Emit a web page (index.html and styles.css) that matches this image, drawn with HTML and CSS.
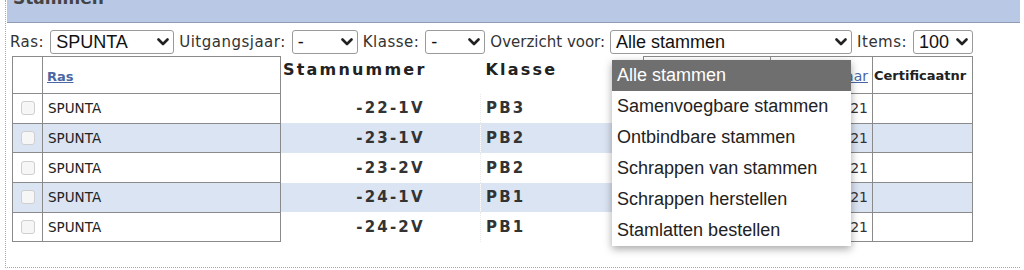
FILE: index.html
```html
<!DOCTYPE html>
<html lang="nl">
<head>
    <meta charset="UTF-8">
    <title>Stammen</title>
    <link rel="stylesheet" href="styles.css">
</head>
<body>
    <div class="panel">
        <div class="panel-head"><h2>Stammen</h2></div>

        <div class="filters">
            <label>Ras:</label>
            <div class="select w-ras"><span>SPUNTA</span><svg class="chev" viewBox="0 0 12 8"><polyline points="1.5,1.5 6,6 10.5,1.5"/></svg></div>
            <label>Uitgangsjaar:</label>
            <div class="select w-year"><span>-</span><svg class="chev" viewBox="0 0 12 8"><polyline points="1.5,1.5 6,6 10.5,1.5"/></svg></div>
            <label>Klasse:</label>
            <div class="select w-class"><span>-</span><svg class="chev" viewBox="0 0 12 8"><polyline points="1.5,1.5 6,6 10.5,1.5"/></svg></div>
            <label class="tight">Overzicht voor:</label>
            <div class="select-wrap">
                <div class="select w-view"><span>Alle stammen</span><svg class="chev" viewBox="0 0 12 8"><polyline points="1.5,1.5 6,6 10.5,1.5"/></svg></div>
                <ul class="dropdown">
                    <li class="active">Alle stammen</li>
                    <li>Samenvoegbare stammen</li>
                    <li>Ontbindbare stammen</li>
                    <li>Schrappen van stammen</li>
                    <li>Schrappen herstellen</li>
                    <li>Stamlatten bestellen</li>
                </ul>
            </div>
            <label>Items:</label>
            <div class="select w-items"><span>100</span><svg class="chev" viewBox="0 0 12 8"><polyline points="1.5,1.5 6,6 10.5,1.5"/></svg></div>
        </div>

        <table class="grid">
            <colgroup>
                <col style="width:30px">
                <col style="width:238px">
                <col style="width:200px">
                <col style="width:163px">
                <col style="width:127px">
                <col style="width:102px">
                <col style="width:100px">
            </colgroup>
            <thead>
                <tr>
                    <th class="bx"></th>
                    <th class="bx"><a href="#">Ras</a></th>
                    <th class="mid nr">Stamnummer</th>
                    <th class="mid cls">Klasse</th>
                    <th class="bx"></th>
                    <th class="bx year"><a href="#">Uitgangsjaar</a></th>
                    <th class="bx cert">Certificaatnr</th>
                </tr>
            </thead>
            <tbody>
                <tr>
                    <td class="bx"><span class="check"></span></td>
                    <td class="bx ras">SPUNTA</td>
                    <td class="mid nr">-22-1V</td>
                    <td class="mid cls">PB3</td>
                    <td class="bx"></td>
                    <td class="bx year">2021</td>
                    <td class="bx"></td>
                </tr>
                <tr class="alt">
                    <td class="bx"><span class="check"></span></td>
                    <td class="bx ras">SPUNTA</td>
                    <td class="mid nr">-23-1V</td>
                    <td class="mid cls">PB2</td>
                    <td class="bx"></td>
                    <td class="bx year">2021</td>
                    <td class="bx"></td>
                </tr>
                <tr>
                    <td class="bx"><span class="check"></span></td>
                    <td class="bx ras">SPUNTA</td>
                    <td class="mid nr">-23-2V</td>
                    <td class="mid cls">PB2</td>
                    <td class="bx"></td>
                    <td class="bx year">2021</td>
                    <td class="bx"></td>
                </tr>
                <tr class="alt">
                    <td class="bx"><span class="check"></span></td>
                    <td class="bx ras">SPUNTA</td>
                    <td class="mid nr">-24-1V</td>
                    <td class="mid cls">PB1</td>
                    <td class="bx"></td>
                    <td class="bx year">2021</td>
                    <td class="bx"></td>
                </tr>
                <tr>
                    <td class="bx"><span class="check"></span></td>
                    <td class="bx ras">SPUNTA</td>
                    <td class="mid nr">-24-2V</td>
                    <td class="mid cls">PB1</td>
                    <td class="bx"></td>
                    <td class="bx year">2021</td>
                    <td class="bx"></td>
                </tr>
            </tbody>
        </table>
    </div>
</body>
</html>
```

FILE: styles.css
```css
body {
    margin: 0;
    width: 1024px;
    height: 270px;
    overflow: hidden;
    background: #fff;
    color: #333;
    font-family: "DejaVu Sans", Verdana, sans-serif;
}
.panel {
    margin: 0 4px 0 5px;
    height: 268px;
    box-sizing: border-box;
    border-left: 1px dotted #aaa;
    border-bottom: 1px dotted #aaa;
}
.panel-head {
    height: 22px;
    margin-left: 1px;
    background: #b9c8e4;
    border-bottom: 1px solid #8e9bb5;
    overflow: hidden;
}
.panel-head h2 {
    margin: -10px 0 0 0;
    padding-left: 6px;
    font-size: 17px;
    line-height: 17px;
    color: #444;
}
.filters {
    display: flex;
    align-items: center;
    height: 24px;
    padding: 7px 0 0 4px;
}
.filters label {
    font-size: 15px;
    letter-spacing: 0.5px;
    margin-right: 6px;
    color: #333;
}
.filters label.tight {
    letter-spacing: 0;
    margin-right: 5px;
}
.select {
    display: flex;
    align-items: center;
    justify-content: space-between;
    height: 24px;
    box-sizing: border-box;
    padding: 0 4px 0 5px;
    margin-right: 5px;
    border: 1px solid #9a9a9a;
    border-radius: 3px;
    background: #fff;
    font-family: "Liberation Sans", Arial, sans-serif;
    font-size: 18px;
    color: #111;
}
.chev {
    width: 12px;
    height: 8px;
    fill: none;
    stroke: #222;
    stroke-width: 2.6;
    stroke-linecap: round;
    stroke-linejoin: round;
}
.w-ras { width: 124px; }
.w-year { width: 66px; }
.w-class { width: 60px; }
.w-view { width: 242px; }
.w-items { width: 60px; }
.select-wrap {
    position: relative;
}
.dropdown {
    position: absolute;
    top: 30px;
    left: 2px;
    z-index: 5;
    width: 239px;
    margin: 0;
    padding: 0;
    list-style: none;
    background: #fff;
    box-shadow: 0 3px 8px rgba(0, 0, 0, 0.35);
    font-family: "Liberation Sans", Arial, sans-serif;
    font-size: 18px;
    color: #222;
}
.dropdown li {
    height: 31px;
    line-height: 31px;
    padding-left: 5px;
}
.dropdown li.active {
    background: #6f6f6f;
    color: #fff;
}
.grid {
    margin: 2px 0 0 6px;
    width: 960px;
    table-layout: fixed;
    border-collapse: collapse;
}
.grid th,
.grid td {
    padding: 0;
    text-align: left;
    white-space: nowrap;
    overflow: hidden;
}
.grid thead tr {
    height: 37px;
}
.grid tbody tr {
    height: 29.7px;
}
.grid tr.alt td {
    background: #dbe4f3;
}
.bx {
    border: 1px solid #8a8a8a;
    vertical-align: middle;
}
.grid th a {
    color: #4b67a3;
    font-size: 13px;
    font-weight: bold;
}
.grid th.bx a {
    margin-left: 4px;
}
.grid th.mid {
    vertical-align: top;
    padding-top: 3px;
    font-size: 16px;
    letter-spacing: 2.2px;
    color: #222;
}
.grid th.nr {
    padding-left: 2px;
}
.grid th.cls,
.grid td.cls {
    padding-left: 5px;
}
.grid td.mid {
    border-left: 1px dotted #e8e8e8;
    font-size: 15px;
    font-weight: bold;
    letter-spacing: 2.2px;
    color: #333;
}
.grid td.nr {
    text-align: center;
    padding-left: 20px;
}
.grid .year {
    text-align: right;
    padding-right: 4px;
}
.grid th.year a {
    font-weight: normal;
    font-size: 14px;
    margin: 0;
}
.grid td.year {
    font-size: 14px;
    color: #333;
}
.grid th.cert {
    font-size: 13px;
    color: #222;
    padding-left: 1px;
}
.grid td.ras {
    padding-left: 5px;
    font-size: 13.5px;
    color: #222;
}
.check {
    display: block;
    width: 14px;
    height: 14px;
    margin: 0 auto;
    box-sizing: border-box;
    border: 1px solid #cfcfcf;
    border-radius: 3px;
    background: #f6f6f6;
}
```
